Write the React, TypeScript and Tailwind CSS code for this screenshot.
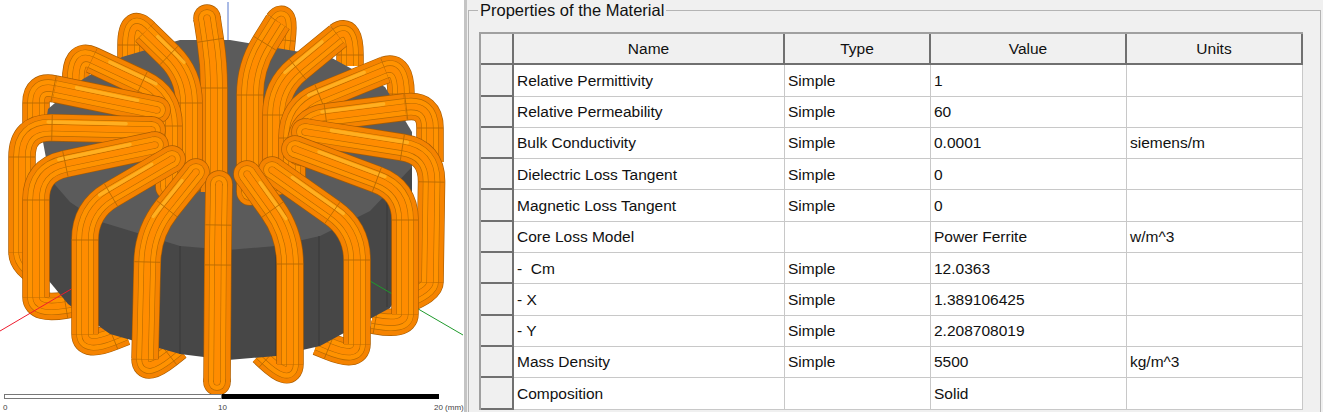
import React from 'react';

type Pt = [number, number];
type Coil = { main: Pt[]; behind?: Pt[]; r?: number; endCap?: boolean };

const FONT = "font-['Liberation_Sans',Arial,sans-serif]";

const ROWS = [
  ['Relative Permittivity', 'Simple', '1', ''],
  ['Relative Permeability', 'Simple', '60', ''],
  ['Bulk Conductivity', 'Simple', '0.0001', 'siemens/m'],
  ['Dielectric Loss Tangent', 'Simple', '0', ''],
  ['Magnetic Loss Tangent', 'Simple', '0', ''],
  ['Core Loss Model', '', 'Power Ferrite', 'w/m^3'],
  ['-  Cm', 'Simple', '12.0363', ''],
  ['- X', 'Simple', '1.389106425', ''],
  ['- Y', 'Simple', '2.208708019', ''],
  ['Mass Density', 'Simple', '5500', 'kg/m^3'],
  ['Composition', '', 'Solid', ''],
];

// back to front, each main runs from the hole out to the outer leg
const COILS: Coil[] = [
  { main: [[207, 16], [214, 62], [214, 190]], r: 24 },
  { main: [[250, 190], [250, 65], [278, 20]], behind: [[278, 20], [285, 10], [281, 48]], r: 28 },
  { main: [[276, 180], [276, 85], [338, 34]], behind: [[338, 34], [350, 25], [350, 64]], r: 28 },
  { main: [[189, 180], [189, 73], [145, 30]], behind: [[145, 30], [131, 15], [131, 70]], r: 28 },
  { main: [[169, 185], [169, 94], [92, 58]], behind: [[92, 58], [75, 50], [76, 92]], r: 30 },
  { main: [[292, 175], [292, 106], [385, 68]], behind: [[385, 68], [401, 62], [401, 96]], r: 30 },
  { main: [[157, 108], [55, 87]], behind: [[55, 87], [36, 83], [36, 130]], r: 18 },
  { main: [[300, 150], [302, 118], [405, 105]], behind: [[405, 105], [430, 102], [430, 160]], r: 24 },
  { main: [[152, 128], [22, 125], [22, 250]], behind: [[22, 250], [22, 265], [50, 277]], r: 30 },
  { main: [[305, 130], [432, 150], [430, 280]], behind: [[430, 280], [430, 288], [405, 298]], r: 30 },
  { main: [[155, 143], [36, 168], [36, 295]], behind: [[36, 295], [36, 308], [72, 302]], r: 30 },
  { main: [[295, 147], [405, 188], [405, 312]], behind: [[405, 312], [405, 324], [372, 318]], r: 30 },
  { main: [[172, 157], [85, 208], [85, 332]], behind: [[85, 332], [85, 346], [125, 330]], r: 30 },
  { main: [[272, 168], [357, 228], [357, 342]], behind: [[357, 342], [357, 356], [318, 340]], r: 30 },
  { main: [[196, 170], [148, 230], [145, 357]], behind: [[145, 357], [145, 371], [178, 345]], r: 30 },
  { main: [[247, 172], [290, 232], [290, 362]], behind: [[290, 362], [290, 376], [262, 350]], r: 30 },
  { main: [[219, 182], [218, 243], [217, 380]], r: 20, endCap: true },
];

const LAYERS: [number, string][] = [
  [27.5, '#a85c00'],
  [26.2, '#f58300'],
  [17.4, '#b86a00'],
  [16.2, '#ff9200'],
  [7.2, '#b86a00'],
  [6, '#ff8c00'],
];

function roundPath(pts: Pt[], r: number) {
  let d = `M${pts[0][0]},${pts[0][1]}`;
  const seams: Pt[][] = [];
  const seamAt = (p: Pt, ux: number, uy: number) => {
    seams.push([[p[0] - uy * 13, p[1] + ux * 13], [p[0] + uy * 13, p[1] - ux * 13]]);
  };
  for (let i = 1; i < pts.length - 1; i++) {
    const [a, b, c] = [pts[i - 1], pts[i], pts[i + 1]];
    const l1 = Math.hypot(a[0] - b[0], a[1] - b[1]);
    const l2 = Math.hypot(c[0] - b[0], c[1] - b[1]);
    const r1 = Math.min(r, l1 - 0.01);
    const r2 = Math.min(r, l2 - 0.01);
    const u1x = (a[0] - b[0]) / l1, u1y = (a[1] - b[1]) / l1;
    const u2x = (c[0] - b[0]) / l2, u2y = (c[1] - b[1]) / l2;
    const t1: Pt = [b[0] + u1x * r1, b[1] + u1y * r1];
    const t2: Pt = [b[0] + u2x * r2, b[1] + u2y * r2];
    d += ` L${t1[0]},${t1[1]} Q${b[0]},${b[1]} ${t2[0]},${t2[1]}`;
    seamAt(t1, u1x, u1y);
    seamAt(t2, u2x, u2y);
  }
  const last = pts[pts.length - 1];
  d += ` L${last[0]},${last[1]}`;
  return { d, seams };
}

// lit band on the upper side of the slanted runs
function highlights(pts: Pt[]) {
  const out: Pt[][] = [];
  for (let i = 0; i < pts.length - 1; i++) {
    const [a, b] = [pts[i], pts[i + 1]];
    const dx = b[0] - a[0], dy = b[1] - a[1];
    const l = Math.hypot(dx, dy);
    if (Math.abs(dx) < 30) continue;
    let nx = -dy / l, ny = dx / l;
    if (ny > 0) { nx = -nx; ny = -ny; }
    out.push([
      [a[0] + dx * 0.2 + nx * 5.6, a[1] + dy * 0.2 + ny * 5.6],
      [a[0] + dx * 0.8 + nx * 5.6, a[1] + dy * 0.8 + ny * 5.6],
    ]);
  }
  return out;
}

function Tube({ pts, r = 20, startCap, endCap }: { pts: Pt[]; r?: number; startCap?: boolean; endCap?: boolean }) {
  const { d, seams } = roundPath(pts, r);
  const first = pts[0];
  const last = pts[pts.length - 1];
  return (
    <g fill="none">
      {LAYERS.map(([w, c], i) => (
        <g key={i}>
          {startCap && <circle cx={first[0]} cy={first[1]} r={w / 2} fill={c} />}
          {endCap && <circle cx={last[0]} cy={last[1]} r={w / 2} fill={c} />}
          <path d={d} stroke={c} strokeWidth={w} />
        </g>
      ))}
      {startCap && highlights(pts).map((h, i) => (
        <line key={i} x1={h[0][0]} y1={h[0][1]} x2={h[1][0]} y2={h[1][1]} stroke="#ffb224" strokeWidth={3.4} strokeLinecap="round" opacity={0.9} />
      ))}
      {seams.map((s, i) => (
        <line key={i} x1={s[0][0]} y1={s[0][1]} x2={s[1][0]} y2={s[1][1]} stroke="#b86a00" strokeWidth={0.9} />
      ))}
    </g>
  );
}

function ToroidModel() {
  return (
    <svg width="465" height="392" viewBox="0 0 465 392" className="block blur-[0.3px]">
      <line x1="228" y1="0" x2="228" y2="40" stroke="#5577cc" strokeWidth="1" />
      {COILS.map((c, i) => c.behind && <Tube key={i} pts={c.behind} r={c.r ?? 20} />)}
      <path
        d="M49,140 L49,279 L68,302 L110,332 L180,352 L228,358 L276,354 L320,344 L390,306 L412,272 L412,140 Z"
        fill="#474747"
      />
      <path
        d="M43,140 L48,107 L83,77 L122,55 L180,38 L230,38 L330,55 L385,85 L412,130 L412,165 L370,209 L320,234 L276,244 L228,248 L180,244 L98,219 L70,200 L50,177 Z"
        fill="#5b5b5b"
      />
      <line x1="180" y1="244" x2="180" y2="352" stroke="#383838" strokeWidth="1" />
      <line x1="276" y1="244" x2="276" y2="354" stroke="#383838" strokeWidth="1" />
      <line x1="319" y1="234" x2="319" y2="344" stroke="#383838" strokeWidth="1" />
      <line x1="387" y1="190" x2="387" y2="305" stroke="#383838" strokeWidth="1" />
      <line x1="95" y1="274" x2="97" y2="272.8" stroke="#ee1c2e" strokeWidth="1" />
      <line x1="0" y1="329" x2="73" y2="286" stroke="#ee1c2e" strokeWidth="1" />
      <line x1="370" y1="279" x2="463" y2="333" stroke="#1f9a2c" strokeWidth="1" />
      {COILS.map((c, i) => (
        <Tube key={i} pts={c.main} r={c.r ?? 20} startCap endCap={c.endCap} />
      ))}
    </svg>
  );
}

function ScaleBar() {
  return (
    <div className="flex flex-col">
      <div className="flex h-[5px] pl-[4px]">
        <div className="w-[218px] border border-[#777777] bg-white" />
        <div className="w-[217px] bg-black" />
      </div>
      <div className="mt-[4px] flex pl-[3px] text-[8px] leading-[10px] text-[#444444]">
        <span className="w-[215px]">0</span>
        <span className="w-[216px]">10</span>
        <span className="whitespace-nowrap">20 (mm)</span>
      </div>
    </div>
  );
}

function PropertyGrid() {
  return (
    <div className="grid w-[824px] grid-cols-[33px_271px_146px_196px_176px] auto-rows-[31.3px] border-l-2 border-t-2 border-[#a0a0a0] text-[15.5px] text-[#111111]">
      <div className="border-b-2 border-r-2 border-[#707070] bg-[#f0f0f0]" />
      {['Name', 'Type', 'Value', 'Units'].map(h => (
        <div key={h} className="flex items-center justify-center border-b-2 border-r-2 border-[#707070] bg-[#f0f0f0]">{h}</div>
      ))}
      {ROWS.map(row => (
        <React.Fragment key={row[0]}>
          <div className="border-b-2 border-r-2 border-[#707070] bg-[#f0f0f0]" />
          {row.map((cell, i) => (
            <div key={i} className="flex items-center whitespace-pre border-b border-r border-[#c8c8c8] bg-white pl-[3px]">{cell}</div>
          ))}
        </React.Fragment>
      ))}
    </div>
  );
}

export default function App() {
  return (
    <div className={`flex h-[412px] w-[1323px] overflow-hidden bg-white ${FONT}`}>
      <div className="w-[464px] shrink-0 pt-[2px]">
        <ToroidModel />
        <ScaleBar />
      </div>
      <div className="flex-1 border-l-[3px] border-[#c4c4c4] bg-[#f0f0f0] pl-[1px] pr-[2px] pt-[10px]">
        <div className="relative h-[420px] border-l border-r border-t border-[#b4b4b4] pl-[10px] pt-[21px]">
          <div className="absolute left-[9px] top-[-10px] bg-[#f0f0f0] px-[2px] text-[16.5px] leading-[18px] text-[#111111]">Properties of the Material</div>
          <PropertyGrid />
        </div>
      </div>
    </div>
  );
}
